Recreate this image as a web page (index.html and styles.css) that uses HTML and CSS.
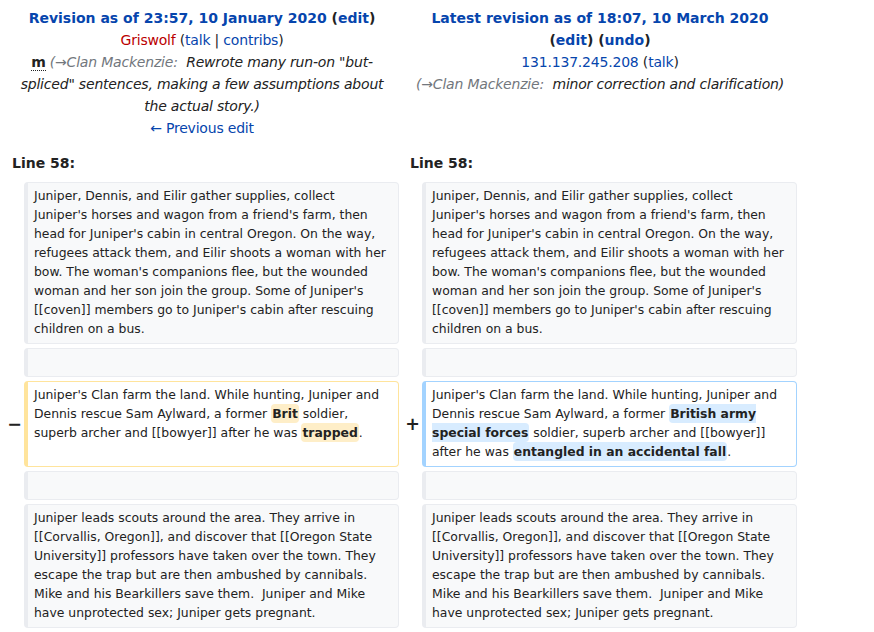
FILE: index.html
```html
<!DOCTYPE html>
<html lang="en">
<head>
<meta charset="utf-8">
<title>Difference between revisions</title>
<link rel="stylesheet" href="styles.css">
</head>
<body>
<div class="diff">
  <div class="hdr">
    <div class="title"><a href="#">Revision as of 23:57, 10 January 2020</a> <span class="paren">(<a href="#">edit</a>)</span></div>
    <div class="info"><a href="#" class="new">Griswolf</a> <span class="tools">(<a href="#">talk</a> | <a href="#">contribs</a>)</span></div>
    <div class="info summary"><abbr class="minor" title="This is a minor edit">m</abbr> <span class="comment"><span class="auto">(→Clan Mackenzie:</span>&nbsp; Rewrote many run-on "but-spliced" sentences, making a few assumptions about the actual story.)</span></div>
    <div class="info"><a href="#">← Previous edit</a></div>
  </div>
  <div class="hdr">
    <div class="title"><a href="#">Latest revision as of 18:07, 10 March 2020</a> <span class="paren">(<a href="#">edit</a>)</span> <span class="paren">(<a href="#">undo</a>)</span></div>
    <div class="info"><a href="#">131.137.245.208</a> <span class="tools">(<a href="#">talk</a>)</span></div>
    <div class="info summary"><span class="comment"><span class="auto">(→Clan Mackenzie:</span>&nbsp; minor correction and clarification)</span></div>
  </div>

  <div class="lineno">Line 58:</div>
  <div class="lineno">Line 58:</div>

  <div class="marker"></div>
  <div class="cell ctx">Juniper, Dennis, and Eilir gather supplies, collect Juniper's horses and wagon from a friend's farm, then head for Juniper's cabin in central Oregon. On the way, refugees attack them, and Eilir shoots a woman with her bow. The woman's companions flee, but the wounded woman and her son join the group. Some of Juniper's [[coven]] members go to Juniper's cabin after rescuing children on a bus.</div>
  <div class="marker"></div>
  <div class="cell ctx">Juniper, Dennis, and Eilir gather supplies, collect Juniper's horses and wagon from a friend's farm, then head for Juniper's cabin in central Oregon. On the way, refugees attack them, and Eilir shoots a woman with her bow. The woman's companions flee, but the wounded woman and her son join the group. Some of Juniper's [[coven]] members go to Juniper's cabin after rescuing children on a bus.</div>

  <div class="marker"></div>
  <div class="cell ctx"><br></div>
  <div class="marker"></div>
  <div class="cell ctx"><br></div>

  <div class="marker"><span>−</span></div>
  <div class="cell del">Juniper's Clan farm the land. While hunting, Juniper and Dennis rescue Sam Aylward, a former <del class="hl">Brit</del> soldier, superb archer and [[bowyer]] after he was <del class="hl">trapped</del>.</div>
  <div class="marker"><span>+</span></div>
  <div class="cell add">Juniper's Clan farm the land. While hunting, Juniper and Dennis rescue Sam Aylward, a former <ins class="hl">British army special forces</ins> soldier, superb archer and [[bowyer]] after he was <ins class="hl">entangled in an accidental fall</ins>.</div>

  <div class="marker"></div>
  <div class="cell ctx"><br></div>
  <div class="marker"></div>
  <div class="cell ctx"><br></div>

  <div class="marker"></div>
  <div class="cell ctx">Juniper leads scouts around the area. They arrive in [[Corvallis, Oregon]], and discover that [[Oregon State University]] professors have taken over the town. They escape the trap but are then ambushed by cannibals. Mike and his Bearkillers save them.&nbsp; Juniper and Mike have unprotected sex; Juniper gets pregnant.</div>
  <div class="marker"></div>
  <div class="cell ctx">Juniper leads scouts around the area. They arrive in [[Corvallis, Oregon]], and discover that [[Oregon State University]] professors have taken over the town. They escape the trap but are then ambushed by cannibals. Mike and his Bearkillers save them.&nbsp; Juniper and Mike have unprotected sex; Juniper gets pregnant.</div>
</div>
</body>
</html>
```

FILE: styles.css
```css
html, body {
  margin: 0;
  background: #ffffff;
}

body {
  font-family: "DejaVu Sans", sans-serif;
  font-size: 14px;
  color: #222222;
}

a {
  color: #0645ad;
  text-decoration: none;
}

a.new {
  color: #ba0000;
}

.diff {
  display: grid;
  grid-template-columns: 15px 375px 15px 375px;
  column-gap: 4px;
  row-gap: 4px;
  padding: 7px 0 0 5px;
}

.hdr {
  grid-column: span 2;
  text-align: center;
  line-height: 22px;
  padding: 0 8px 7px;
}

.title {
  font-weight: bold;
}

.info {
  letter-spacing: -0.2px;
}

.summary .comment {
  font-style: italic;
}

.auto {
  color: #72777d;
}

abbr.minor {
  font-weight: bold;
  text-decoration: none;
  border-bottom: 1px dotted #222222;
  cursor: help;
}

.lineno {
  grid-column: span 2;
  font-weight: bold;
  line-height: 22px;
  padding: 2px 0 4px 7px;
}

.marker {
  align-self: center;
  text-align: right;
  font-weight: bold;
  font-size: 17.5px;
  line-height: 1.2;
}

.marker span {
  margin-right: -2px;
}

.cell {
  font-size: 12.4px;
  line-height: 19px;
  border: 1px solid #eaecf0;
  border-left-width: 4px;
  border-radius: 4px;
  padding: 3px 7px 5px 6px;
  overflow-wrap: break-word;
}

.ctx {
  background: #f8f9fa;
}

.del {
  border-color: #ffe49c;
}

.add {
  border-color: #a3d3ff;
}

.hl {
  font-weight: bold;
  text-decoration: none;
  border-radius: 4px;
  padding: 2px 1px;
}

del.hl {
  background: #feeec8;
}

ins.hl {
  background: #d8ecff;
}
```
